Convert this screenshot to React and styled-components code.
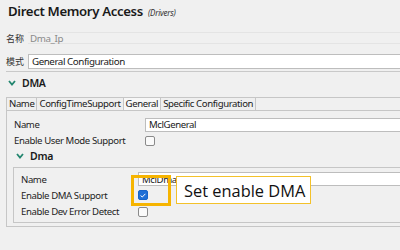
import React from "react";
import styled, { createGlobalStyle } from "styled-components";

const Global = createGlobalStyle`
  html, body { margin: 0; padding: 0; background: #f0f0f0; }
  body { width: 400px; height: 250px; overflow: hidden; font-family: "Noto Sans", "Open Sans", "Noto Sans CJK SC", sans-serif; color: #1e1e1e; }
`;

const Page = styled.div`
  width: 400px;
  height: 250px;
  background: #f0f0f0;
  overflow: hidden;
`;

const Header = styled.div`
  height: 28px;
  display: flex;
  align-items: baseline;
  padding: 2px 0 0 8px;
  box-sizing: border-box;
`;

const Title = styled.span`
  font-size: 13.2px;
  font-weight: 600;
  letter-spacing: -0.35px;
  color: #1a1a1a;
`;

const Sub = styled.span`
  font-size: 8px;
  font-style: italic;
  color: #333;
  margin-left: 5px;
  letter-spacing: -0.2px;
`;

const FieldRow = styled.div`
  display: flex;
  align-items: center;
  height: ${(p) => p.h}px;
  margin-top: ${(p) => p.mt}px;
  padding-left: 6px;
`;

const FieldLabel = styled.span`
  width: 22px;
  font-size: 9px;
  font-family: "Noto Sans CJK SC", sans-serif;
  color: #333;
`;

const ReadOnly = styled.div`
  flex: 1;
  height: 100%;
  box-sizing: border-box;
  border-top: 1px solid #e4e4e4;
  border-bottom: 1px solid #e4e4e4;
  display: flex;
  align-items: center;
  padding-left: 2px;
  font-size: 9.8px;
  letter-spacing: -0.4px;
  color: #8a8a8a;
`;

const TextBox = styled.div`
  flex: 1;
  height: 100%;
  box-sizing: border-box;
  background: #fff;
  border: 1px solid #bdbdbd;
  border-right: none;
  display: flex;
  align-items: center;
  padding-left: 3px;
  font-size: 9.8px;
  letter-spacing: -0.45px;
  color: #1a1a1a;
  white-space: nowrap;
  overflow: hidden;
`;

const Separator = styled.div`
  margin: 2px 0 0 6px;
  border-top: 1px solid #c9c9c9;
`;

const SectionHead = styled.div`
  display: flex;
  align-items: center;
  height: ${(p) => p.h}px;
  padding-left: ${(p) => p.pl}px;
  font-size: 10.5px;
  font-weight: 600;
  letter-spacing: -0.3px;
  color: #1a1a1a;
  gap: 6px;
`;

const Chevron = () => (
  <svg width="8" height="6" viewBox="0 0 8 6">
    <polyline points="1,1 4,4.5 7,1" fill="none" stroke="#23866f" strokeWidth="1.8" />
  </svg>
);

const TabPanel = styled.div`
  margin: 3px 0 0 6px;
  border-left: 1px solid #c6c6c6;
  border-bottom: 1px solid #c6c6c6;
  height: 130px;
  box-sizing: border-box;
`;

const TabBar = styled.div`
  display: flex;
  height: 14px;
  box-sizing: border-box;
  border-top: 1px solid #c6c6c6;
  border-bottom: 1px solid #c6c6c6;
`;

const Tab = styled.div`
  padding: 0 2px;
  font-size: 9.6px;
  letter-spacing: -0.4px;
  line-height: 12px;
  border-right: 1px solid #c6c6c6;
  background: ${(p) => (p.active ? "#f7f7f7" : "#efefef")};
  color: #1a1a1a;
  white-space: nowrap;
`;

const Body = styled.div`
  padding: 6px 0 0 0;
`;

const PropRow = styled.div`
  display: flex;
  align-items: center;
  height: ${(p) => p.h || 16}px;
  padding-left: 7px;
`;

const PropLabel = styled.span`
  width: ${(p) => p.w}px;
  flex: none;
  font-size: 9.6px;
  letter-spacing: -0.4px;
  color: #1e1e1e;
  white-space: nowrap;
`;

const PropInput = styled(TextBox)`
  height: 14px;
  font-size: 9.6px;
  letter-spacing: -0.4px;
`;

const Check = styled.span`
  width: 10px;
  height: 10px;
  box-sizing: border-box;
  border-radius: 2px;
  border: 1px solid ${(p) => (p.on ? "#1764c8" : "#8a8a8a")};
  background: ${(p) => (p.on ? "#1f6fd6" : "#fafafa")};
  display: inline-flex;
  align-items: center;
  justify-content: center;
`;

const Inner = styled.div`
  position: relative;
  margin: 4px 0 0 6px;
  border-top: 1px solid #c6c6c6;
  border-left: 1px solid #c6c6c6;
  border-bottom: 1px solid #c6c6c6;
  height: 56px;
  box-sizing: border-box;
  padding-top: 4px;
`;

const Highlight = styled.div`
  position: absolute;
  left: 117px;
  top: 7px;
  width: 40px;
  height: 31px;
  box-sizing: border-box;
  border: 3px solid #f6b400;
`;

const Callout = styled.div`
  position: absolute;
  left: 162px;
  top: 8px;
  width: 135px;
  height: 28px;
  box-sizing: border-box;
  background: #fff;
  border: 1px solid #f3c12a;
  display: flex;
  align-items: center;
  padding-left: 7px;
  font-family: "Open Sans", "Noto Sans", sans-serif;
  font-size: 16.4px;
  color: #111;
  white-space: nowrap;
`;

export default function App() {
  return (
    <Page>
      <Global />
      <Header>
        <Title>Direct Memory Access</Title>
        <Sub>(Drivers)</Sub>
      </Header>
      <FieldRow h={12} mt={4}>
        <FieldLabel>名称</FieldLabel>
        <ReadOnly>Dma_Ip</ReadOnly>
      </FieldRow>
      <FieldRow h={15} mt={10}>
        <FieldLabel>模式</FieldLabel>
        <TextBox>General Configuration</TextBox>
      </FieldRow>
      <Separator />
      <SectionHead h={22} pl={8}>
        <Chevron />
        DMA
      </SectionHead>
      <TabPanel>
        <TabBar>
          <Tab>Name</Tab>
          <Tab>ConfigTimeSupport</Tab>
          <Tab active>General</Tab>
          <Tab>Specific Configuration</Tab>
        </TabBar>
        <Body>
          <PropRow h={15}>
            <PropLabel w={131}>Name</PropLabel>
            <PropInput>MclGeneral</PropInput>
          </PropRow>
          <PropRow h={17}>
            <PropLabel w={131}>Enable User Mode Support</PropLabel>
            <Check />
          </PropRow>
          <SectionHead h={14} pl={9}>
            <Chevron />
            Dma
          </SectionHead>
          <Inner>
            <PropRow h={14}>
              <PropLabel w={117}>Name</PropLabel>
              <PropInput>MclDma</PropInput>
            </PropRow>
            <PropRow h={18}>
              <PropLabel w={117}>Enable DMA Support</PropLabel>
              <Check on>
                <svg width="6" height="5" viewBox="0 0 6 5">
                  <polyline points="0.6,2.6 2.3,4 5.4,0.8" fill="none" stroke="#fff" strokeWidth="1" />
                </svg>
              </Check>
            </PropRow>
            <PropRow h={15}>
              <PropLabel w={117}>Enable Dev Error Detect</PropLabel>
              <Check />
            </PropRow>
            <Highlight />
            <Callout>Set enable DMA</Callout>
          </Inner>
        </Body>
      </TabPanel>
    </Page>
  );
}
